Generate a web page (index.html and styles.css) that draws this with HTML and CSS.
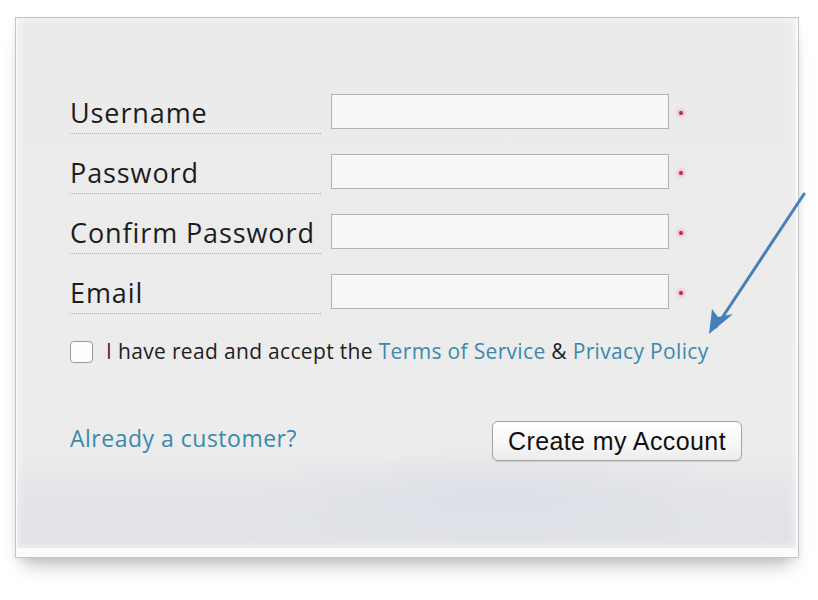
FILE: index.html
```html
<!DOCTYPE html>
<html>
<head>
<meta charset="utf-8">
<link rel="stylesheet" href="styles.css">
</head>
<body>
<div class="page">
  <div class="card">
    <div class="panel">
      <div class="fields">
        <div class="row"><div class="label">Username</div><div class="input"></div><span class="req"></span></div>
        <div class="row"><div class="label">Password</div><div class="input"></div><span class="req"></span></div>
        <div class="row"><div class="label">Confirm Password</div><div class="input"></div><span class="req"></span></div>
        <div class="row"><div class="label">Email</div><div class="input"></div><span class="req"></span></div>
      </div>
      <div class="terms">
        <span class="checkbox"></span>
        <span class="terms-text"><span class="first">I</span> have read and accept the <a class="link">Terms of Service</a> &amp; <a class="link">Privacy Policy</a></span>
      </div>
      <div class="actions">
        <a class="link customer">Already a customer?</a>
        <button class="btn">Create my Account</button>
      </div>
    </div>
  </div>
  <svg class="arrow" width="120" height="160" viewBox="0 0 120 160">
    <line x1="107" y1="17" x2="19" y2="150" stroke="#4580ba" stroke-width="3" stroke-linecap="round"/>
    <polygon points="12,157 15,132 21,140 36,137" fill="#4580ba"/>
  </svg>
</div>
</body>
</html>
```
FILE: styles.css
```css
html, body {
  margin: 0;
  padding: 0;
  background: #ffffff;
}
.page {
  position: relative;
  width: 818px;
  height: 600px;
  padding: 17px 0 0 15px;
  box-sizing: border-box;
}
.card {
  width: 784px;
  height: 541px;
  box-sizing: border-box;
  border: 1px solid #c5c5c5;
  background: #fbfbfb;
  padding: 0 2px 9px 1px;
  box-shadow: 0 14px 18px -8px rgba(0, 0, 0, 0.28), 0 2px 6px rgba(0, 0, 0, 0.05);
}
.panel {
  height: 100%;
  box-sizing: border-box;
  padding: 76px 54px 0 53px;
  background:
    radial-gradient(ellipse 260px 50px at 480px 480px, rgba(218, 222, 230, 0.8), rgba(218, 222, 230, 0) 100%),
    linear-gradient(to bottom, #ebebeb 0%, #ececec 82%, #e4e5e9 90%, #e0e2e7 100%);
  box-shadow: inset 0 0 10px rgba(255, 255, 255, 0.7);
  font-family: "Open Sans", "Noto Sans", sans-serif;
  color: #1e1e1e;
}
.fields {
  display: flex;
  flex-direction: column;
  gap: 20px;
}
.row {
  display: flex;
  align-items: flex-start;
  height: 40px;
}
.label {
  width: 251px;
  height: 39px;
  line-height: 38px;
  font-size: 27px;
  letter-spacing: 0.9px;
  border-bottom: 1px dotted #b0b0b0;
  white-space: nowrap;
  color: #1c1c1c;
}
.input {
  width: 336px;
  height: 33px;
  margin-left: 10px;
  border: 1.5px solid #b4b4b4;
  background: #f7f7f7;
}
.req {
  width: 4px;
  height: 4px;
  margin: 17px 0 0 10px;
  border-radius: 50%;
  background: #b22a55;
  box-shadow: 0 0 3px 2px rgba(240, 140, 170, 0.45);
}
.terms {
  display: flex;
  align-items: center;
  margin-top: 27px;
  height: 22px;
}
.checkbox {
  width: 21px;
  height: 20px;
  border: 1.5px solid #9a9a9a;
  border-radius: 4px;
  background: #fdfdfd;
  box-sizing: content-box;
}
.terms-text {
  margin-left: 13px;
  font-size: 21px;
  color: #1e1e1e;
  white-space: nowrap;
  letter-spacing: 0.33px;
  margin-top: -2px;
}
.first {
  color: #5a1f30;
}
.link {
  color: #3a89ad;
  text-decoration: none;
}
.actions {
  display: flex;
  justify-content: space-between;
  align-items: center;
  margin-top: 58px;
}
.customer {
  font-size: 23px;
  margin-top: -6px;
  letter-spacing: 0.5px;
}
.btn {
  width: 250px;
  height: 40px;
  border: 1px solid #a4a4a4;
  border-radius: 6px;
  background: linear-gradient(to bottom, #ffffff 0%, #f6f6f6 60%, #ececec 100%);
  font-family: "Liberation Sans", Arial, sans-serif;
  font-size: 25px;
  letter-spacing: 0.4px;
  color: #111;
  padding: 0;
  box-shadow: 0 1px 1px rgba(0, 0, 0, 0.12);
}
.arrow {
  position: absolute;
  left: 697px;
  top: 177px;
}
```
